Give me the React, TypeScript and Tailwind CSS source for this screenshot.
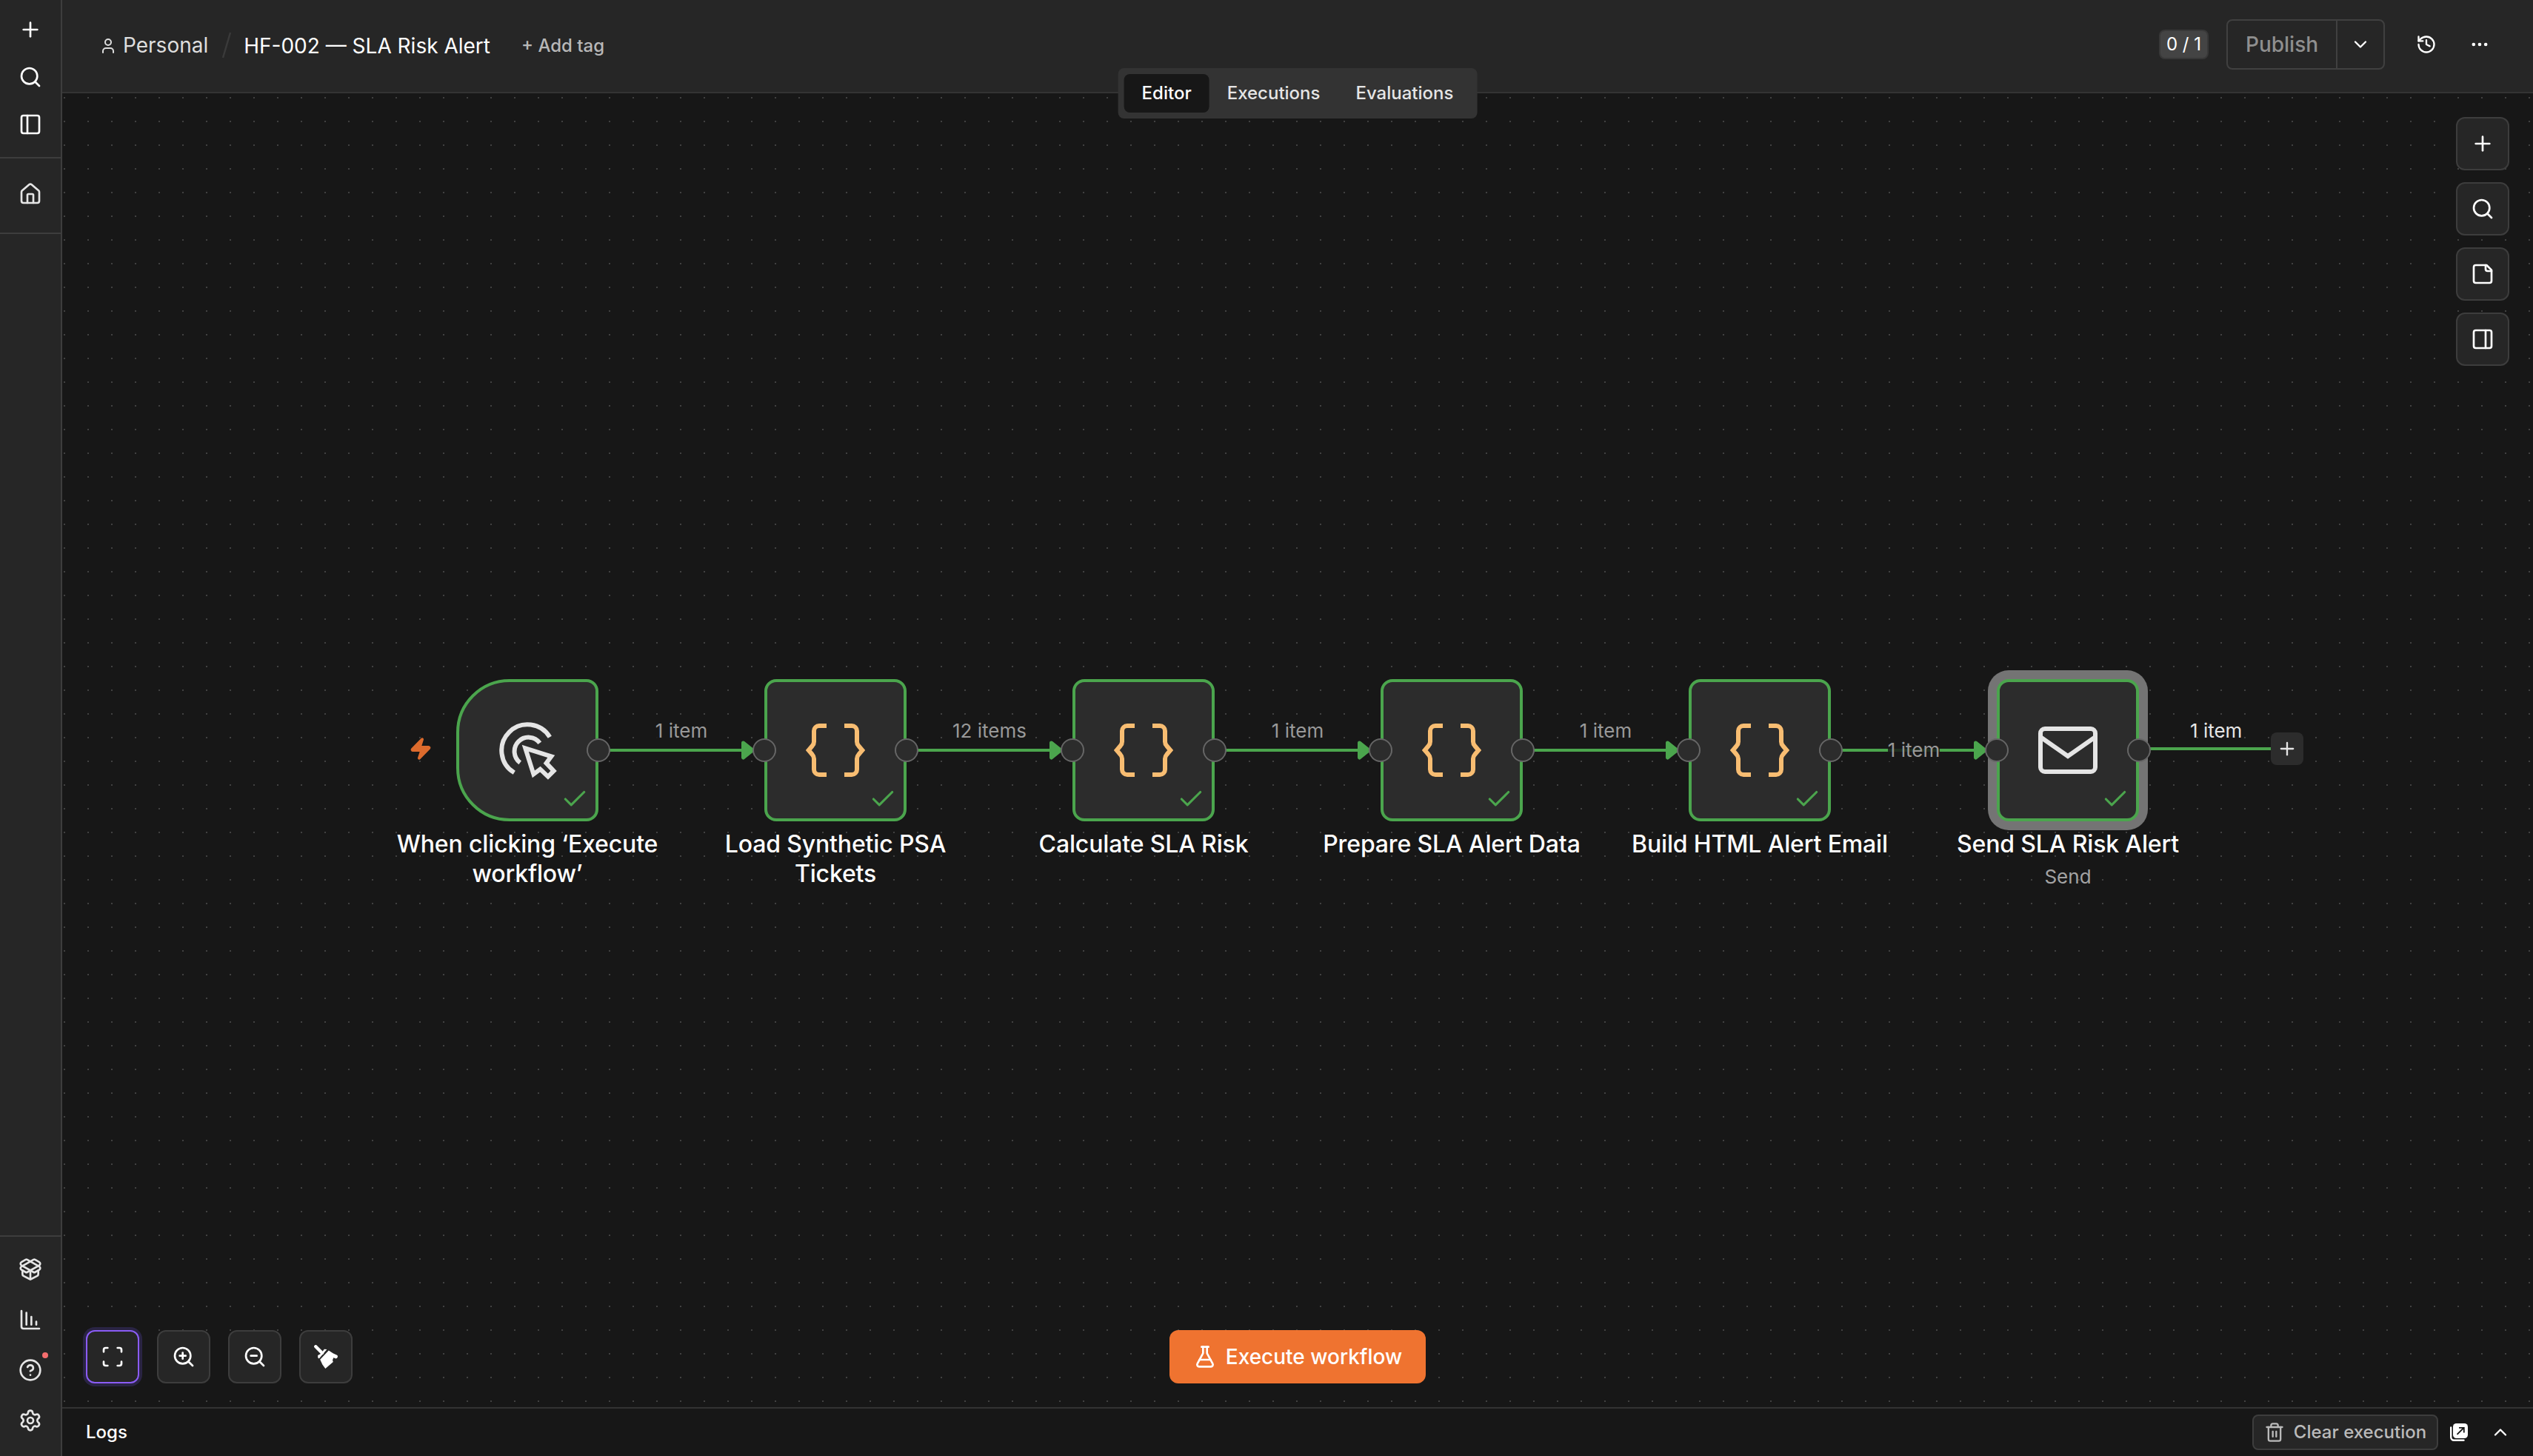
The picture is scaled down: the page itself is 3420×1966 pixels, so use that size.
import type { ReactNode } from "react";
import {
  ChartColumnDecreasing,
  Check,
  ChevronDown,
  ChevronUp,
  CircleQuestionMark,
  Ellipsis,
  FlaskConical,
  History,
  House,
  PackageOpen,
  PanelLeft,
  PanelRight,
  Plus,
  Scan,
  Search,
  Settings,
  Trash2,
  User,
  Zap,
  ZoomIn,
  ZoomOut,
} from "lucide-react";

type NodeKind = "trigger" | "code" | "email";

type FlowNode = {
  id: string;
  x: number;
  kind: NodeKind;
  label: string;
  subtitle?: string;
  selected?: boolean;
};

type FlowEdge = {
  from: string;
  x: number;
  label: string;
  inline?: boolean;
};

const NODES: FlowNode[] = [
  { id: "trigger", x: 532, kind: "trigger", label: "When clicking ‘Execute workflow’" },
  { id: "load", x: 948, kind: "code", label: "Load Synthetic PSA Tickets" },
  { id: "risk", x: 1364, kind: "code", label: "Calculate SLA Risk" },
  { id: "prepare", x: 1780, kind: "code", label: "Prepare SLA Alert Data" },
  { id: "build", x: 2196, kind: "code", label: "Build HTML Alert Email" },
  { id: "send", x: 2612, kind: "email", label: "Send SLA Risk Alert", subtitle: "Send", selected: true },
];

// x = right side of the source node
const EDGES: FlowEdge[] = [
  { from: "trigger", x: 724, label: "1 item" },
  { from: "load", x: 1140, label: "12 items" },
  { from: "risk", x: 1556, label: "1 item" },
  { from: "prepare", x: 1972, label: "1 item" },
  { from: "build", x: 2388, label: "1 item", inline: true },
];

/* ---------- icons ---------- */

function ClickIcon() {
  return (
    <svg width="80" height="80" viewBox="0 0 80 80" fill="none" stroke="#e5e5e5" strokeWidth="6">
      <path d="M70.3 22.3A35 35 0 1 0 22.3 70.3" />
      <path d="M56.8 30.2A19 19 0 1 0 30.2 56.8" />
      <path d="M37.3 37.3 72.3 48.4 65.6 57.4 75.6 67.9 67.9 75.6 57.4 65.6 48.4 72.3Z" />
    </svg>
  );
}

function BracesIcon() {
  return (
    <svg width="80" height="80" viewBox="0 0 80 80" fill="none" stroke="#f8bd72" strokeWidth="6">
      <path d="M28 7H18a7 7 0 0 0-7 7v14.5c0 2.2-.8 4-2.2 5.5L3.8 40l5 6c1.4 1.5 2.2 3.3 2.2 5.5V66a7 7 0 0 0 7 7h10" />
      <path d="M52 7h10a7 7 0 0 1 7 7v14.5c0 2.2.8 4 2.2 5.5l5 6-5 6c-1.4 1.5-2.2 3.3-2.2 5.5V66a7 7 0 0 1-7 7H52" />
    </svg>
  );
}

function MailIcon() {
  return (
    <svg width="80" height="80" viewBox="0 0 80 80" fill="none" stroke="#e5e5e5" strokeWidth="6">
      <rect x="3" y="11" width="74" height="58" rx="6" />
      <path d="M3.5 22.5 40 48l36.5-25.5" />
    </svg>
  );
}

function NoteIcon() {
  return (
    <svg
      width="32"
      height="32"
      viewBox="0 0 24 24"
      fill="none"
      stroke="currentColor"
      strokeWidth="2"
      strokeLinecap="round"
      strokeLinejoin="round"
    >
      <path d="M16 3H5a2 2 0 0 0-2 2v14a2 2 0 0 0 2 2h14a2 2 0 0 0 2-2V8Z" />
      <path d="M15 3v4a2 2 0 0 0 2 2h4" />
    </svg>
  );
}

function BroomIcon() {
  return (
    <svg width="32" height="32" viewBox="0 0 32 32" fill="#fff">
      <path d="M2.3 2.3 11 11" stroke="#fff" strokeWidth="4.4" strokeLinecap="round" />
      <path d="M5.2 17.2V14l4.3-2.2L13.8 5.800l3.600.200L6.800 18.500Z" />
      <path d="M8.2 19.8 19.8 7.6l6.200 4 5 2.200c1.400.800 1.200 2.600 0 4l-1.500.700-3.200-1.300-1.300 3.300.8 2.500L15.3 32l-4-5.500Z" />
    </svg>
  );
}

function PopOutIcon() {
  return (
    <svg width="24" height="24" viewBox="0 0 24 24" fill="none">
      <path d="M1.2 5.5v13.3a4 4 0 0 0 4 4h13.3" stroke="#fff" strokeWidth="2.4" strokeLinecap="round" />
      <rect x="4" y="0" width="20" height="20" rx="4.5" fill="#fff" />
      <path d="M9.5 14.8 18.5 6M12 5.8h6.8v6.6" stroke="#171717" strokeWidth="1.8" />
    </svg>
  );
}

const ICONS: Record<NodeKind, ReactNode> = {
  trigger: <ClickIcon />,
  code: <BracesIcon />,
  email: <MailIcon />,
};

/* ---------- sidebar ---------- */

function Sidebar() {
  return (
    <aside className="flex h-full w-[84px] shrink-0 flex-col border-r-2 border-[#3d3d3d] bg-[#262626] text-[#e5e5e5]">
      <div className="flex h-[214px] flex-col items-center gap-8 border-b-2 border-[#3d3d3d] pt-6 text-white">
        <Plus size={32} />
        <Search size={32} />
        <PanelLeft size={32} />
      </div>
      <div className="flex h-[102px] flex-col items-center border-b-2 border-[#3d3d3d] pt-8">
        <House size={32} />
      </div>
      <div className="mt-auto flex h-[298px] flex-col items-center gap-9 border-t-2 border-[#3d3d3d] pt-7">
        <PackageOpen size={32} />
        <ChartColumnDecreasing size={32} />
        <div className="relative">
          <CircleQuestionMark size={32} />
          <span className="absolute -top-2 left-8 size-2 rounded-full bg-[#f56e6e]" />
        </div>
        <Settings size={32} />
      </div>
    </aside>
  );
}

/* ---------- header ---------- */

function Header() {
  return (
    <header className="relative z-10 flex h-[126px] shrink-0 items-center border-b-2 border-[#333] bg-[#262626] pr-[54px] pb-1 pl-[50px] text-white">
      <div className="flex items-center pt-0.5 text-[28px] leading-9">
        <User size={24} className="mt-0.5 text-[#dedede]" />
        <span className="ml-2 text-[#dedede]">Personal</span>
        <svg width="14" height="36" viewBox="0 0 14 36" className="ml-[18px]">
          <path d="M2 35 12 1" stroke="#3a3a3a" strokeWidth="2.5" />
        </svg>
        <span className="mt-0.5 ml-4">HF-002 — SLA Risk Alert</span>
        <span className="mt-0.5 ml-[42px] text-2xl font-medium text-[#b8b8b8]">+ Add tag</span>
      </div>

      <div className="ml-auto flex items-center">
        <div className="flex h-10 w-[67px] items-center justify-center rounded-lg border-2 border-[#383838] bg-[#444] text-2xl">
          0 / 1
        </div>
        <div className="ml-6 flex h-[68px] w-[214px] rounded-lg border-2 border-[#404040]">
          <button className="flex w-[148px] items-center justify-center border-r-2 border-[#404040] text-[28px] font-medium text-[#8f8f8f]">
            Publish
          </button>
          <button className="flex flex-1 items-center justify-center">
            <ChevronDown size={28} />
          </button>
        </div>
        <History size={28} className="ml-[42px]" />
        <Ellipsis size={28} className="ml-11 mr-1" />
      </div>

      <nav className="absolute top-[92px] left-1/2 flex h-[68px] -translate-x-1/2 items-center rounded-lg bg-[#333] px-2 text-2xl font-medium text-[#e5e5e5]">
        <span className="flex h-[52px] items-center rounded-lg bg-[#171717] px-6 text-white">Editor</span>
        <span className="px-6">Executions</span>
        <span className="px-6">Evaluations</span>
      </nav>
    </header>
  );
}

/* ---------- canvas ---------- */

function ToolButton({ children, active }: { children: ReactNode; active?: boolean }) {
  return (
    <button
      className={
        active
          ? "flex size-[72px] items-center justify-center rounded-xl border-2 border-[#8b5cf6] bg-[#262626] text-white ring-4 ring-[#2a2444]"
          : "flex size-[72px] items-center justify-center rounded-xl border-2 border-[#3d3d3d] bg-[#262626] text-white"
      }
    >
      {children}
    </button>
  );
}

function Handle({ side }: { side: "left" | "right" }) {
  return (
    <span
      className={`absolute top-[80px] size-8 rounded-full border-2 border-[#666] bg-[#2c2c2c] ${
        side === "left" ? "-left-4" : "-right-4"
      }`}
    />
  );
}

function CanvasNode({ node }: { node: FlowNode }) {
  const isTrigger = node.kind === "trigger";

  return (
    <div className="absolute top-[791px] size-[192px]" style={{ left: node.x }}>
      <div
        className={`flex size-full items-center justify-center border-4 border-[#4ba54d] bg-[#2c2c2c] ${
          isTrigger ? "rounded-l-[72px] rounded-r-2xl" : "rounded-2xl"
        } ${node.selected ? "ring-12 ring-[#747474]" : ""}`}
      >
        {ICONS[node.kind]}
      </div>
      <Check size={38} className="absolute right-[13px] bottom-[11px] text-[#4ba54d]" />
      {isTrigger ? (
        <Zap size={32} className="absolute top-[78px] -left-16 fill-[#dd6b2d] text-[#dd6b2d]" />
      ) : (
        <Handle side="left" />
      )}
      <Handle side="right" />

      <div className="absolute top-[203px] left-1/2 flex w-[384px] -translate-x-1/2 flex-col items-center text-center">
        <span className="px-3 text-[32px] leading-10 font-medium tracking-[-0.15px] text-white">
          {node.label}
        </span>
        {node.subtitle && (
          <span className="mt-1.5 text-[26px] leading-9 text-[#a3a3a3]">{node.subtitle}</span>
        )}
      </div>
    </div>
  );
}

function EdgeLabel({ edge }: { edge: FlowEdge }) {
  return (
    <div
      className={`absolute flex w-[192px] justify-center text-[26px] leading-[30px] text-[#999] ${
        edge.inline ? "top-[872px]" : "top-[846px]"
      }`}
      style={{ left: edge.x + 16 }}
    >
      <span className="bg-[#171717]/85">{edge.label}</span>
    </div>
  );
}

function Canvas() {
  return (
    <section className="relative flex-1 overflow-hidden bg-[#171717]">
      <svg className="absolute inset-0 size-full">
        <defs>
          <pattern id="dots" width="32" height="32" patternUnits="userSpaceOnUse">
            <rect x="2" y="5" width="2" height="2" fill="#414141" />
          </pattern>
        </defs>
        <rect width="100%" height="100%" fill="url(#dots)" />
        {EDGES.map((e) => (
          <g key={e.from} stroke="#4ba54d" fill="#4ba54d">
            <path d={`M${e.x} 887h208`} strokeWidth="4" />
            <path
              d={`M${e.x + 195.5} 877l12.5 10l-12.5 10z`}
              strokeWidth="5"
              strokeLinejoin="round"
            />
          </g>
        ))}
        <path d="M2804 885h180" stroke="#4ba54d" strokeWidth="4" />
      </svg>

      {EDGES.map((e) => (
        <EdgeLabel key={e.from} edge={e} />
      ))}
      {NODES.map((n) => (
        <CanvasNode key={n.id} node={n} />
      ))}

      {/* open output of the last node */}
      <div className="absolute top-[846px] left-[2873px] text-[26px] leading-[30px] text-[#e5e5e5]">1 item</div>
      <button className="absolute top-[863px] left-[2982px] flex size-11 items-center justify-center rounded-lg bg-[#2c2c2c] text-[#e5e5e5]">
        <Plus size={28} />
      </button>

      <div className="absolute top-8 right-8 flex flex-col gap-4">
        <ToolButton>
          <Plus size={32} />
        </ToolButton>
        <ToolButton>
          <Search size={32} />
        </ToolButton>
        <ToolButton>
          <NoteIcon />
        </ToolButton>
        <ToolButton>
          <PanelRight size={32} />
        </ToolButton>
      </div>

      <div className="absolute bottom-8 left-8 flex gap-6">
        <ToolButton active>
          <Scan size={32} />
        </ToolButton>
        <ToolButton>
          <ZoomIn size={32} />
        </ToolButton>
        <ToolButton>
          <ZoomOut size={32} />
        </ToolButton>
        <ToolButton>
          <BroomIcon />
        </ToolButton>
      </div>

      <button className="absolute bottom-8 left-1/2 flex h-[72px] w-[346px] -translate-x-1/2 items-center justify-center gap-3 rounded-xl bg-[#ef7330] text-[28px] font-medium text-white">
        <FlaskConical size={32} />
        Execute workflow
      </button>
    </section>
  );
}

function LogsBar() {
  return (
    <footer className="flex h-[66px] shrink-0 items-center border-t-2 border-[#333] bg-[#171717] pr-[30px] pl-8 text-2xl font-medium text-white">
      <span>Logs</span>
      <button className="ml-auto flex h-12 w-[251px] items-center justify-center gap-3 rounded-lg border-2 border-[#3d3d3d] bg-[#262626] text-[#bababa]">
        <Trash2 size={28} />
        Clear execution
      </button>
      <span className="ml-4">
        <PopOutIcon />
      </span>
      <ChevronUp size={28} className="ml-[30px]" />
    </footer>
  );
}

export default function App() {
  return (
    <div className="flex h-[1966px] w-[3420px] overflow-hidden bg-[#171717] font-['Inter',sans-serif]">
      <Sidebar />
      <main className="flex min-w-0 flex-1 flex-col">
        <Header />
        <Canvas />
        <LogsBar />
      </main>
    </div>
  );
}
